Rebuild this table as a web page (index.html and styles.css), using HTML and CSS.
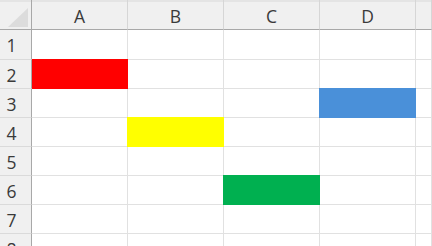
FILE: index.html
```html
<!DOCTYPE html>
<html>
<head>
<meta charset="utf-8">
<link rel="stylesheet" href="styles.css">
</head>
<body>
<div class="sheet">
  <div class="corner"><svg width="32" height="30" viewBox="0 0 32 30"><polygon points="28,8 28,27 8,27" fill="#dcdcdc"/></svg></div>
  <div class="colhead">A</div>
  <div class="colhead">B</div>
  <div class="colhead">C</div>
  <div class="colhead">D</div>
  <div class="colhead"></div>

  <div class="rowhead">1</div>
  <div class="cell"></div><div class="cell"></div><div class="cell"></div><div class="cell"></div><div class="cell"></div>

  <div class="rowhead">2</div>
  <div class="cell fill red first"></div><div class="cell"></div><div class="cell"></div><div class="cell"></div><div class="cell"></div>

  <div class="rowhead">3</div>
  <div class="cell"></div><div class="cell"></div><div class="cell"></div><div class="cell fill blue"></div><div class="cell"></div>

  <div class="rowhead">4</div>
  <div class="cell"></div><div class="cell fill yellow"></div><div class="cell"></div><div class="cell"></div><div class="cell"></div>

  <div class="rowhead">5</div>
  <div class="cell"></div><div class="cell"></div><div class="cell"></div><div class="cell"></div><div class="cell"></div>

  <div class="rowhead">6</div>
  <div class="cell"></div><div class="cell"></div><div class="cell fill green"></div><div class="cell"></div><div class="cell"></div>

  <div class="rowhead">7</div>
  <div class="cell"></div><div class="cell"></div><div class="cell"></div><div class="cell"></div><div class="cell"></div>

  <div class="rowhead">8</div>
  <div class="cell"></div><div class="cell"></div><div class="cell"></div><div class="cell"></div><div class="cell"></div>
</div>
</body>
</html>
```
FILE: styles.css
```css
html, body {
  margin: 0;
  padding: 0;
  background: #ffffff;
  overflow: hidden;
}
.sheet {
  display: grid;
  grid-template-columns: 32px 96px 96px 96px 96px 1fr;
  grid-template-rows: 30px 30px repeat(7, 29px);
  width: 432px;
  height: 246px;
  overflow: hidden;
  font-family: "Open Sans", "Noto Sans", sans-serif;
  color: #3a3a3a;
}
.sheet > div {
  box-sizing: border-box;
}
.corner {
  background: #f0f0f0;
  border-right: 1px solid #a8a8a8;
  border-bottom: 1px solid #a8a8a8;
  box-shadow: inset 0 2px 0 #e4e4e4;
  position: relative;
}
.corner svg {
  display: block;
}
.colhead {
  background: #f0f0f0;
  border-right: 1px solid #d6d6d6;
  border-bottom: 1px solid #a8a8a8;
  box-shadow: inset 0 2px 0 #e4e4e4;
  display: flex;
  align-items: center;
  justify-content: center;
  font-size: 17.5px;
  padding-top: 2px;
}
.rowhead {
  background: #f0f0f0;
  border-right: 1px solid #a8a8a8;
  border-bottom: 1px solid #dadada;
  display: flex;
  align-items: center;
  justify-content: center;
  padding-right: 8px;
  padding-top: 1px;
  font-size: 17.5px;
}
.cell {
  border-right: 1px solid #e1e1e1;
  border-bottom: 1px solid #e1e1e1;
}
.fill {
  z-index: 1;
}
.red { background: #ff0000; border-color: #ff0000; box-shadow: 0 -1px 0 #ff0000; }
.yellow { background: #ffff00; border-color: #ffff00; box-shadow: -1px -1px 0 #ffff00, -1px 0 0 #ffff00, 0 -1px 0 #ffff00; }
.blue { background: #4a90d9; border-color: #4a90d9; box-shadow: -1px -1px 0 #4a90d9, -1px 0 0 #4a90d9, 0 -1px 0 #4a90d9; }
.green { background: #00b050; border-color: #00b050; box-shadow: -1px -1px 0 #00b050, -1px 0 0 #00b050, 0 -1px 0 #00b050; }
```
